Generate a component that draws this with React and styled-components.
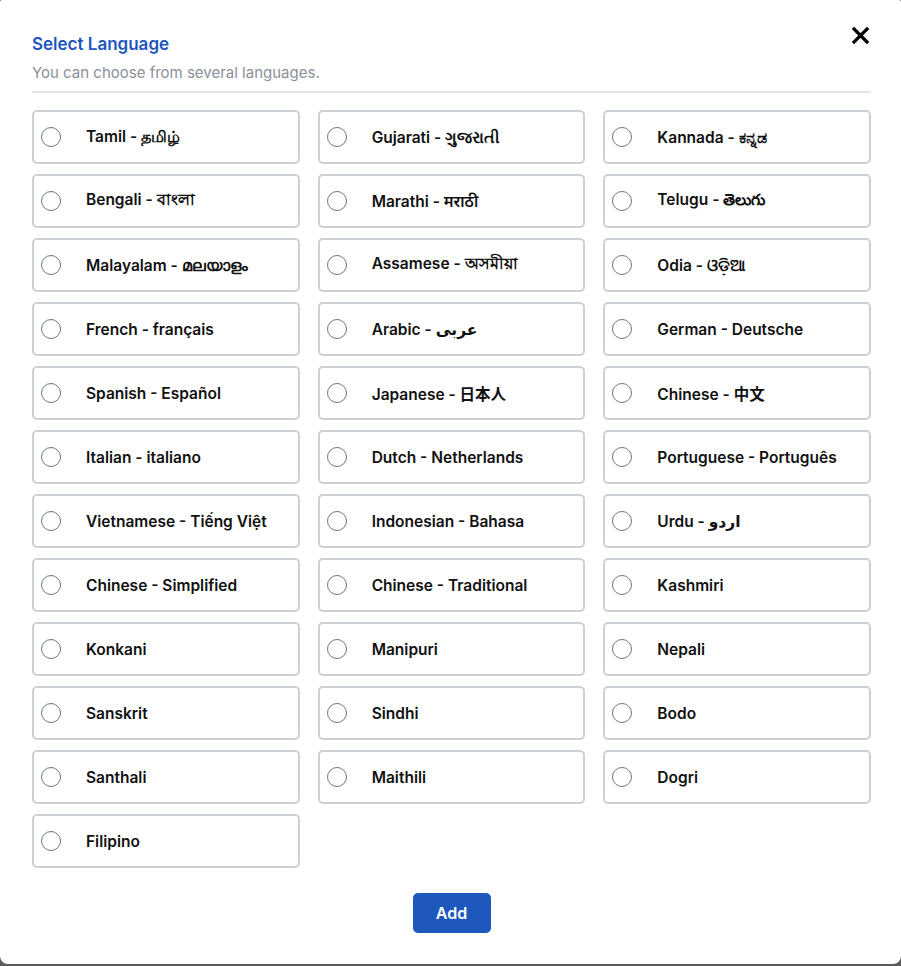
import React, { useState } from "react";
import styled, { createGlobalStyle } from "styled-components";

const Global = createGlobalStyle`
  html, body { margin: 0; padding: 0; background: #5b5b5b; }
  body { font-family: Inter, "Noto Sans", "DejaVu Sans", "Noto Sans CJK JP", sans-serif; }
  * { box-sizing: border-box; }
`;

const Modal = styled.div`
  position: relative;
  width: 901px;
  height: 964px;
  background: #fff;
  border-radius: 2px 2px 8px 8px;
  padding: 32px 30px 0 32px;
`;

const Header = styled.div`
  padding-bottom: 9px;
  border-bottom: 2px solid #e1e4e8;
  margin-bottom: 17px;
`;

const Title = styled.h2`
  margin: 0;
  font-size: 17px;
  font-weight: 600;
  color: #1e56bf;
  line-height: 24px;
`;

const Subtitle = styled.p`
  margin: 7px 0 0;
  font-size: 15px;
  color: #8a909a;
  line-height: 19px;
`;

const Close = styled.button`
  position: absolute;
  top: 24px;
  right: 30px;
  width: 22px;
  height: 22px;
  padding: 0;
  border: none;
  background: none;
  display: flex;
  align-items: center;
  justify-content: center;
  cursor: pointer;
`;

const Grid = styled.div`
  display: grid;
  grid-template-columns: repeat(3, 1fr);
  column-gap: 18px;
  row-gap: 10px;
`;

const Card = styled.label`
  height: 54px;
  border: 2px solid #cdd1d6;
  border-radius: 5px;
  display: flex;
  align-items: center;
  padding-left: 7px;
  cursor: pointer;
`;

const Radio = styled.span`
  width: 20px;
  height: 20px;
  border-radius: 50%;
  border: 1px solid ${(p) => (p.$on ? "#1e56bf" : "#6f7580")};
  flex: none;
  margin-right: 25px;
  display: flex;
  align-items: center;
  justify-content: center;
  &::after {
    content: "";
    width: 10px;
    height: 10px;
    border-radius: 50%;
    background: ${(p) => (p.$on ? "#1e56bf" : "transparent")};
  }
`;

const Label = styled.span`
  font-size: 15.5px;
  font-weight: 600;
  color: #111;
  white-space: nowrap;
`;

const Footer = styled.div`
  display: flex;
  justify-content: center;
  margin-top: 25px;
`;

const AddButton = styled.button`
  width: 78px;
  height: 40px;
  border: none;
  border-radius: 5px;
  background: #1f58bd;
  color: #fff;
  font-family: inherit;
  font-size: 16px;
  font-weight: 600;
  cursor: pointer;
`;

const languages = [
  "Tamil - தமிழ்",
  "Gujarati - ગુજરાતી",
  "Kannada - ಕನ್ನಡ",
  "Bengali - বাংলা",
  "Marathi - मराठी",
  "Telugu - తెలుగు",
  "Malayalam - മലയാളം",
  "Assamese - অসমীয়া",
  "Odia - ଓଡ଼ିଆ",
  "French - français",
  "Arabic - عربى",
  "German - Deutsche",
  "Spanish - Español",
  "Japanese - 日本人",
  "Chinese - 中文",
  "Italian - italiano",
  "Dutch - Netherlands",
  "Portuguese - Português",
  "Vietnamese - Tiếng Việt",
  "Indonesian - Bahasa",
  "Urdu - اردو",
  "Chinese - Simplified",
  "Chinese - Traditional",
  "Kashmiri",
  "Konkani",
  "Manipuri",
  "Nepali",
  "Sanskrit",
  "Sindhi",
  "Bodo",
  "Santhali",
  "Maithili",
  "Dogri",
  "Filipino",
];

export default function App() {
  const [sel, setSel] = useState(null);
  return (
    <>
      <Global />
      <Modal>
        <Header>
          <Title>Select Language</Title>
          <Subtitle>You can choose from several languages.</Subtitle>
        </Header>
        <Close aria-label="Close">
          <svg width="17" height="17" viewBox="0 0 17 17">
            <path d="M2 2 L15 15 M15 2 L2 15" stroke="#000" strokeWidth="3.2" strokeLinecap="square" />
          </svg>
        </Close>
        <Grid>
          {languages.map((l) => (
            <Card key={l} onClick={() => setSel(l)}>
              <Radio $on={sel === l} />
              <Label>{l}</Label>
            </Card>
          ))}
        </Grid>
        <Footer>
          <AddButton>Add</AddButton>
        </Footer>
      </Modal>
    </>
  );
}
